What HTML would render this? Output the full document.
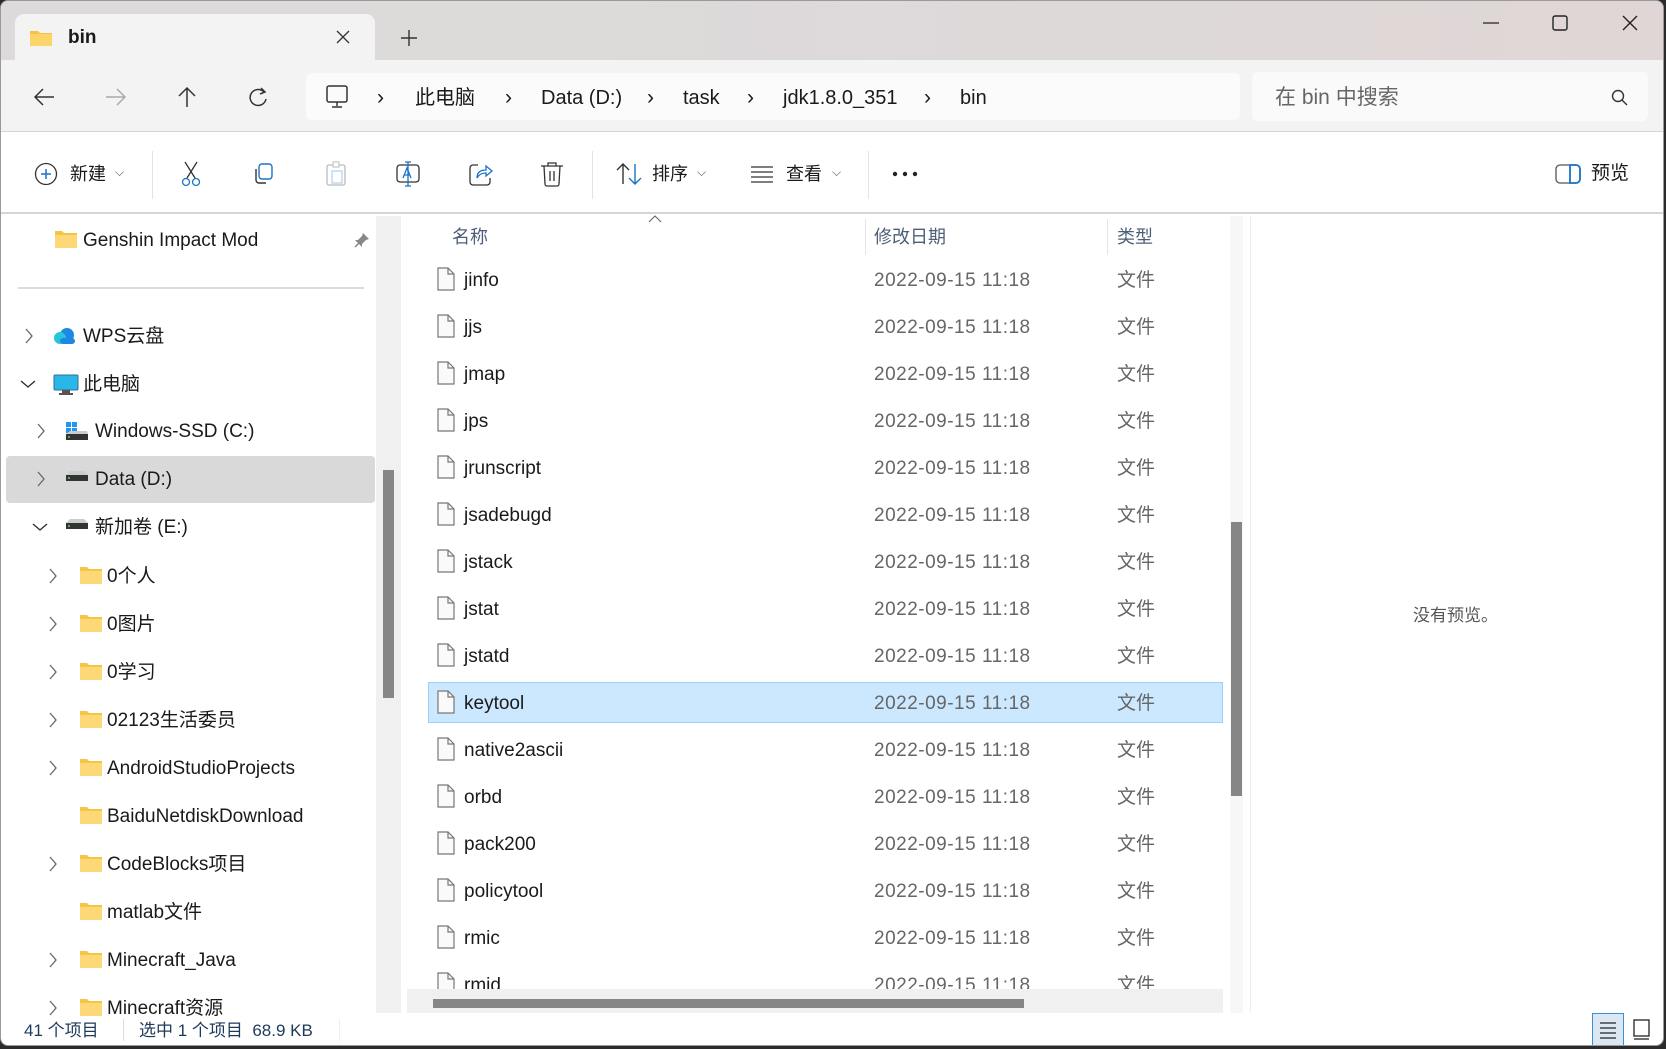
<!DOCTYPE html>
<html><head><meta charset="utf-8"><style>
*{margin:0;padding:0;box-sizing:border-box}
body{width:1666px;height:1049px;background:#2b2b2b;overflow:hidden;font-family:"Liberation Sans","Noto Sans CJK SC",sans-serif;color:#1a1a1a;position:relative}
.a{position:absolute;white-space:nowrap}
#win{position:absolute;left:0;top:0;width:1664px;height:1046px;background:#fff;border-radius:8px;overflow:hidden;border:1px solid #9a9a9a}
.t{font-size:19px;line-height:24px;transform:translateY(-12px)}
.ic{position:absolute}
</style></head><body>
<div id="win">
<div class="a" style="left:0;top:0;width:1664px;height:59px;background:linear-gradient(90deg,#dcdadb,#ded9d9 70%,#e0d6d5)"></div>
<div class="a" style="left:14px;top:13px;width:360px;height:47px;background:#f3f3f3;border-radius:9px 9px 0 0"></div>
<svg class="ic" style="left:28px;top:27px" width="24" height="19"><path d="M1 3h8l2 2h12v13H1z" fill="#f6c445"/><rect x="1" y="6" width="22" height="12" fill="#fbd46a"/></svg>
<div class="a t" style="left:67px;top:37px;font-size:19px;font-weight:bold">bin</div>
<svg class="ic" style="left:334px;top:28px" width="16" height="16"><path d="M2 2L14 14M14 2L2 14" stroke="#333" stroke-width="1.3"/></svg>
<svg class="ic" style="left:399px;top:28px" width="18" height="18"><path d="M9 1V17M1 9H17" stroke="#333" stroke-width="1.4"/></svg>
<svg class="ic" style="left:1481px;top:15px" width="18" height="14"><path d="M1 7H17" stroke="#222" stroke-width="1.2"/></svg>
<svg class="ic" style="left:1551px;top:14px" width="16" height="16"><rect x="1" y="1" width="14" height="14" rx="2" fill="none" stroke="#222" stroke-width="1.4"/></svg>
<svg class="ic" style="left:1621px;top:14px" width="16" height="16"><path d="M1 1L15 15M15 1L1 15" stroke="#222" stroke-width="1.4"/></svg>

<div class="a" style="left:0;top:59px;width:1664px;height:72px;background:#f3f3f3;border-bottom:1px solid #d5d5d5"></div>
<svg class="ic" style="left:32px;top:86px" width="22" height="20"><path d="M21 10H2M10 2L2 10L10 18" fill="none" stroke="#333" stroke-width="1.5"/></svg>
<svg class="ic" style="left:104px;top:86px" width="22" height="20"><path d="M1 10H20M12 2L20 10L12 18" fill="none" stroke="#aaa" stroke-width="1.5"/></svg>
<svg class="ic" style="left:176px;top:85px" width="20" height="22"><path d="M10 21V2M2 10L10 2L18 10" fill="none" stroke="#333" stroke-width="1.5"/></svg>
<svg class="ic" style="left:248px;top:86px" width="20" height="21"><path d="M15 5A8 8 0 1 0 17 12" fill="none" stroke="#333" stroke-width="1.5"/><path d="M12 1L16 5L11 7" fill="none" stroke="#333" stroke-width="1.5"/></svg>
<div class="a" style="left:305px;top:72px;width:934px;height:47px;background:#fbfbfb;border-radius:6px"></div>
<svg class="ic" style="left:324px;top:84px" width="24" height="24"><rect x="2" y="1" width="20" height="16" rx="2" fill="none" stroke="#333" stroke-width="1.5"/><path d="M12 17V21M7 22H17" stroke="#333" stroke-width="1.5"/></svg>
<div class="a t" style="left:376px;top:97px;font-size:21px">›</div>
<div class="a t" style="left:414px;top:97px;font-size:20px">此电脑</div>
<div class="a t" style="left:504px;top:97px;font-size:21px">›</div>
<div class="a t" style="left:540px;top:97px;font-size:20px">Data (D:)</div>
<div class="a t" style="left:646px;top:97px;font-size:21px">›</div>
<div class="a t" style="left:682px;top:97px;font-size:20px">task</div>
<div class="a t" style="left:746px;top:97px;font-size:21px">›</div>
<div class="a t" style="left:782px;top:97px;font-size:20px">jdk1.8.0_351</div>
<div class="a t" style="left:923px;top:97px;font-size:21px">›</div>
<div class="a t" style="left:959px;top:97px;font-size:20px">bin</div>
<div class="a" style="left:1251px;top:71px;width:396px;height:49px;background:#fafafa;border-radius:6px"></div>
<div class="a t" style="left:1274px;top:97px;font-size:21px;color:#666">在 bin 中搜索</div>
<svg class="ic" style="left:1610px;top:88px" width="18" height="18"><circle cx="7" cy="7" r="5.5" fill="none" stroke="#333" stroke-width="1.4"/><path d="M11 11L16 16" stroke="#333" stroke-width="1.4"/></svg>

<div class="a" style="left:0;top:132px;width:1664px;height:81px;background:#fff;border-bottom:2px solid #d5d5d5"></div>
<svg class="ic" style="left:33px;top:161px" width="24" height="24"><circle cx="12" cy="12" r="10.5" fill="none" stroke="#333" stroke-width="1.3"/><path d="M12 7V17M7 12H17" stroke="#1a73c8" stroke-width="1.5"/></svg>
<div class="a t" style="left:69px;top:173px;font-size:18px">新建</div>
<div class="a t" style="left:114px;top:171px;font-size:12px;color:#555">⌵</div>
<div class="a" style="left:151px;top:150px;width:1px;height:48px;background:#e3e3e3"></div>
<svg class="ic" style="left:179px;top:160px" width="22" height="26"><path d="M5 1L15 17M17 1L7 17" stroke="#333" stroke-width="1.3"/><circle cx="6" cy="21" r="3.5" fill="none" stroke="#1a73c8" stroke-width="1.3"/><circle cx="16" cy="21" r="3.5" fill="none" stroke="#1a73c8" stroke-width="1.3"/></svg>
<svg class="ic" style="left:251px;top:162px" width="22" height="22"><rect x="7" y="1" width="13" height="15" rx="3" fill="none" stroke="#1a73c8" stroke-width="1.4"/><path d="M4 6V17a3 3 0 0 0 3 3H14" fill="none" stroke="#333" stroke-width="1.4"/></svg>
<svg class="ic" style="left:324px;top:160px" width="22" height="26"><rect x="2" y="4" width="18" height="20" rx="2" fill="none" stroke="#bbb" stroke-width="1.3"/><rect x="8" y="1" width="6" height="5" fill="#fff" stroke="#bbb"/><rect x="7" y="10" width="10" height="12" fill="none" stroke="#b9d3ef" stroke-width="1.3"/></svg>
<svg class="ic" style="left:394px;top:160px" width="26" height="26"><rect x="2" y="4" width="22" height="17" rx="3" fill="none" stroke="#333" stroke-width="1.3"/><path d="M8 17L12 7L16 17M9.5 14H14.5" fill="none" stroke="#1a73c8" stroke-width="1.3"/><path d="M13 1V25M10 1H16M10 25H16" stroke="#1a73c8" stroke-width="1.3"/></svg>
<svg class="ic" style="left:467px;top:160px" width="26" height="26"><path d="M10 4H5a3 3 0 0 0-3 3V21a3 3 0 0 0 3 3H19a3 3 0 0 0 3-3V17" fill="none" stroke="#333" stroke-width="1.3"/><path d="M9 17C9 11 13 9 18 9V5L24 10L18 15V12C14 12 11 13 9 17Z" fill="none" stroke="#1a73c8" stroke-width="1.3"/></svg>
<svg class="ic" style="left:539px;top:160px" width="24" height="26"><path d="M1 5H23M8 5V2H16V5M4 5L5 23a2 2 0 0 0 2 2H17a2 2 0 0 0 2-2L20 5M10 10V20M14 10V20" fill="none" stroke="#333" stroke-width="1.3"/></svg>
<div class="a" style="left:591px;top:150px;width:1px;height:48px;background:#e3e3e3"></div>
<svg class="ic" style="left:615px;top:161px" width="26" height="24"><path d="M7 22V2M1 8L7 2L13 8" fill="none" stroke="#333" stroke-width="1.4"/><path d="M19 2V22M13 16L19 22L25 16" fill="none" stroke="#1a73c8" stroke-width="1.4"/></svg>
<div class="a t" style="left:651px;top:173px;font-size:18px">排序</div>
<div class="a t" style="left:696px;top:171px;font-size:12px;color:#555">⌵</div>
<svg class="ic" style="left:749px;top:164px" width="24" height="18"><path d="M1 2H23M1 7H23M1 12H23M1 17H23" stroke="#333" stroke-width="1.2"/></svg>
<div class="a t" style="left:785px;top:173px;font-size:18px">查看</div>
<div class="a t" style="left:831px;top:171px;font-size:12px;color:#555">⌵</div>
<div class="a" style="left:867px;top:150px;width:1px;height:48px;background:#e3e3e3"></div>
<svg class="ic" style="left:891px;top:170px" width="26" height="6"><circle cx="3" cy="3" r="2.2" fill="#222"/><circle cx="13" cy="3" r="2.2" fill="#222"/><circle cx="23" cy="3" r="2.2" fill="#222"/></svg>
<svg class="ic" style="left:1554px;top:163px" width="26" height="20"><rect x="1" y="1" width="24" height="18" rx="4" fill="none" stroke="#555" stroke-width="1.3"/><path d="M15 1H21a4 4 0 0 1 4 4V15a4 4 0 0 1-4 4H15Z" fill="none" stroke="#1a73c8" stroke-width="1.8"/></svg>
<div class="a t" style="left:1590px;top:173px;font-size:19px">预览</div>

<div class="a" style="left:375px;top:215px;width:25px;height:797px;background:#f0f0f0"></div>
<div class="a" style="left:382px;top:469px;width:11px;height:228px;background:#868686"></div>
<svg class="ic" style="left:53px;top:229px" width="24" height="19"><path d="M1 1h7l2 2h13v15H1z" fill="#f6c445"/><rect x="1" y="5" width="22" height="13" fill="#fcd877"/></svg>
<div class="a t" style="left:82px;top:240px">Genshin Impact Mod</div>
<svg class="ic" style="left:353px;top:231px" width="16" height="16"><path d="M9 1L15 7L12 8L8 12L8 15L1 8L4 8L8 4Z" fill="#888"/><path d="M5 11L1 15" stroke="#888" stroke-width="1.5"/></svg>
<div class="a" style="left:17px;top:286px;width:346px;height:2px;background:#dcdcdc"></div>
<div class="a" style="left:5px;top:455px;width:369px;height:47px;background:#d9d9d9;border-radius:4px"></div>
<div id="sb"></div>

<div class="a" style="left:406px;top:215px;width:816px;height:775px;background:#fff"></div>
<div class="a" style="left:1229px;top:215px;width:13px;height:797px;background:#f7f7f7"></div>
<div class="a" style="left:1230px;top:521px;width:11px;height:274px;background:#868686"></div>
<svg class="ic" style="left:647px;top:214px" width="14" height="8"><path d="M1 7L7 1L13 7" fill="none" stroke="#666" stroke-width="1.1"/></svg>
<div class="a t" style="left:451px;top:236px;font-size:18px;color:#4d5f78">名称</div>
<div class="a t" style="left:873px;top:236px;font-size:18px;color:#4d5f78">修改日期</div>
<div class="a t" style="left:1116px;top:236px;font-size:18px;color:#4d5f78">类型</div>
<div class="a" style="left:864px;top:218px;width:1px;height:36px;background:#e5e5e5"></div>
<div class="a" style="left:1106px;top:218px;width:1px;height:36px;background:#e5e5e5"></div>
<div class="a" style="left:406px;top:255px;width:816px;height:733px;overflow:hidden" id="list"></div>
<div class="a" style="left:406px;top:988px;width:816px;height:24px;background:#f0f0f0"></div>
<div class="a" style="left:432px;top:998px;width:591px;height:9px;background:#868686"></div>
<div class="a" style="left:1249px;top:215px;width:1px;height:797px;background:#eee"></div>
<div class="a t" style="left:1412px;top:615px;font-size:17px;color:#555">没有预览。</div>

<div class="a t" style="left:23px;top:1030px;font-size:17px;color:#1c3a5c">41 个项目</div>
<div class="a" style="left:122px;top:1018px;width:1px;height:22px;background:#ddd"></div>
<div class="a t" style="left:138px;top:1030px;font-size:17px;color:#1c3a5c">选中 1 个项目&nbsp;&nbsp;68.9 KB</div>
<div class="a" style="left:338px;top:1018px;width:1px;height:22px;background:#eee"></div>
<div class="a" style="left:1591px;top:1012px;width:32px;height:34px;background:#dbe8f4;border:1px solid #3f8fd6"></div>
<svg class="ic" style="left:1598px;top:1020px" width="18" height="18"><path d="M1 2H17M1 7H17M1 12H17M1 17H17" stroke="#222" stroke-width="1.3"/></svg>
<svg class="ic" style="left:1632px;top:1018px" width="17" height="22"><rect x="1" y="1" width="15" height="16" fill="none" stroke="#222" stroke-width="1.3"/><path d="M1 20H16" stroke="#222" stroke-width="1.3"/></svg>
</div>
<script>
var sb=[["chev",27,335,"cloud",52,82,"WPS云盘"],["down",27,383,"pc",52,82,"此电脑"],["chev",39,430,"win",64,94,"Windows-SSD (C:)"],["chev",39,478,"drive",64,94,"Data (D:)"],["down",39,526,"drive",64,94,"新加卷 (E:)"]];
var f=["0个人","0图片","0学习","02123生活委员","AndroidStudioProjects","BaiduNetdiskDownload","CodeBlocks项目","matlab文件","Minecraft_Java","Minecraft资源"];
var nc={"BaiduNetdiskDownload":1,"matlab文件":1};
f.forEach(function(n,i){sb.push([nc[n]?"":"chev",51,575+i*48,"folder",78,106,n]);});
var h="";
var icons={
cloud:'<svg width="24" height="20"><circle cx="14" cy="9" r="7" fill="#1e88e5"/><circle cx="7" cy="12" r="6" fill="#26c6da"/><rect x="7" y="12" width="15" height="6" rx="3" fill="#1e88e5"/></svg>',
pc:'<svg width="26" height="22"><rect x="1" y="1" width="24" height="15" rx="1" fill="#29b6e8" stroke="#3a6c8c"/><rect x="9" y="16" width="8" height="3" fill="#555"/><rect x="6" y="19" width="14" height="2" fill="#555"/></svg>',
win:'<svg width="24" height="20"><rect x="1" y="1" width="5" height="5" fill="#2196f3"/><rect x="7" y="1" width="5" height="5" fill="#2196f3"/><rect x="1" y="7" width="5" height="5" fill="#2196f3"/><rect x="7" y="7" width="5" height="5" fill="#2196f3"/><path d="M1 13L5 10H22L23 13Z" fill="#ccc"/><rect x="1" y="13" width="22" height="6" fill="#333"/><rect x="3" y="15" width="2" height="2" fill="#4caf50"/></svg>',
drive:'<svg width="24" height="14"><path d="M1 6L5 2H19L23 6Z" fill="#ccc"/><rect x="1" y="6" width="22" height="6" fill="#333"/><rect x="3" y="8" width="2" height="2" fill="#4caf50"/></svg>',
folder:'<svg width="24" height="19"><path d="M1 1h7l2 2h13v15H1z" fill="#f6c445"/><rect x="1" y="5" width="22" height="13" fill="#fcd877"/></svg>'};
sb.forEach(function(r){
 if(r[0]=="chev")h+='<svg class="ic" style="left:'+(r[1]-4)+'px;top:'+(r[2]-8)+'px" width="10" height="16"><path d="M2 1L8 8L2 15" fill="none" stroke="#666" stroke-width="1.3"/></svg>';
 if(r[0]=="down")h+='<svg class="ic" style="left:'+(r[1]-8)+'px;top:'+(r[2]-5)+'px" width="16" height="10"><path d="M1 2L8 8L15 2" fill="none" stroke="#333" stroke-width="1.4"/></svg>';
 h+='<div class="ic" style="left:'+r[4]+'px;top:'+(r[2]-10)+'px">'+icons[r[3]]+'</div>';
 h+='<div class="a t" style="left:'+r[5]+'px;top:'+(r[2]+1)+'px">'+r[6]+'</div>';
});
document.getElementById("sb").outerHTML=h;
var files=["jinfo","jjs","jmap","jps","jrunscript","jsadebugd","jstack","jstat","jstatd","keytool","native2ascii","orbd","pack200","policytool","rmic","rmid"];
var l="";
files.forEach(function(n,i){
 var y=278+i*47-255;
 if(n=="keytool")l+='<div class="a" style="left:21px;top:'+(y-20)+'px;width:795px;height:41px;background:#cce8ff;border:1px solid #99d1ff"></div>';
 l+='<svg class="ic" style="left:30px;top:'+(y-12)+'px" width="18" height="24"><path d="M1 1H11L17 7V23H1Z" fill="#fafafa" stroke="#777" stroke-width="1.2"/><path d="M11 1V7H17" fill="none" stroke="#777" stroke-width="1.2"/></svg>';
 l+='<div class="a t" style="left:57px;top:'+(y+2)+'px">'+n+'</div>';
 l+='<div class="a t" style="left:467px;top:'+(y+2)+'px;color:#666;letter-spacing:0.5px">2022-09-15 11:18</div>';
 l+='<div class="a t" style="left:710px;top:'+(y+2)+'px;color:#666">文件</div>';
});
document.getElementById("list").innerHTML=l;
</script>
</body></html>
